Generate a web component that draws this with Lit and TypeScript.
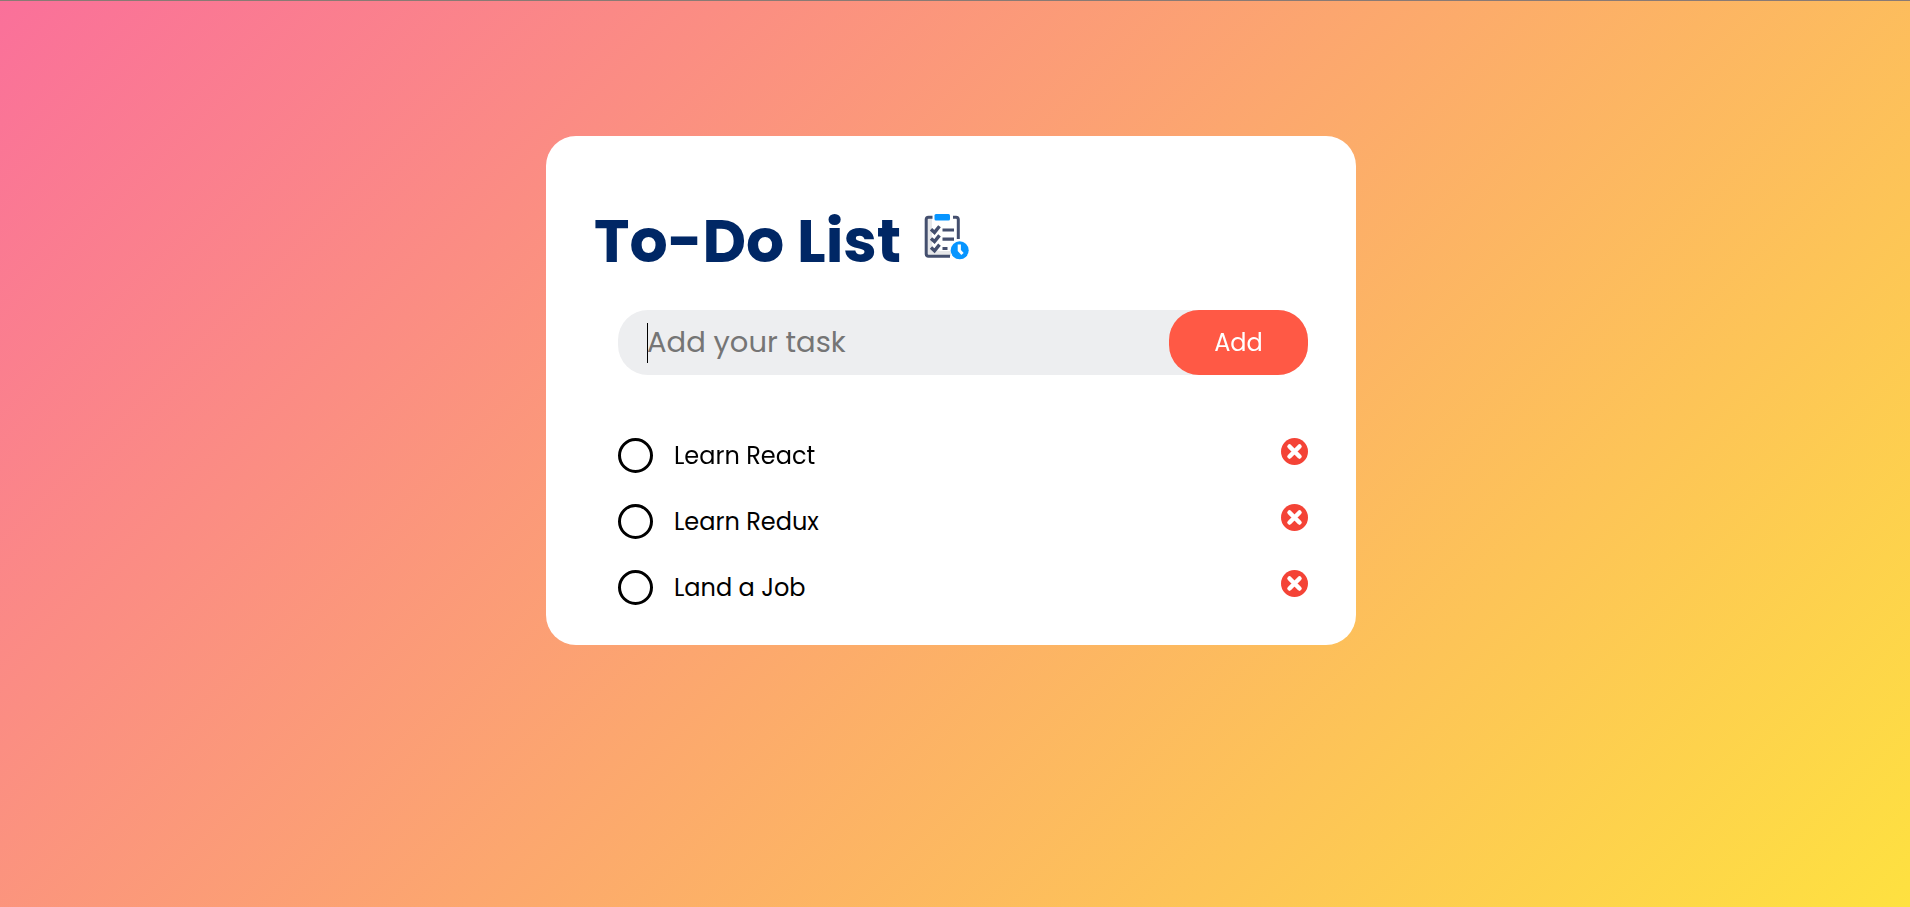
import { LitElement, html, css, svg } from "lit";
import { customElement, state } from "lit/decorators.js";

interface Task {
  id: number;
  text: string;
  done: boolean;
}

@customElement("app-root")
export class AppRoot extends LitElement {
  static styles = css`
    :host {
      display: block;
      font-family: Poppins, Inter, "Open Sans", sans-serif;
      color: #000;
    }
    * {
      box-sizing: border-box;
    }
    .page {
      min-height: 100vh;
      padding: 135px 8px 40px 0;
      border-top: 1px solid #8a7a74;
      background: linear-gradient(135deg, #fa709a, #fee140) border-box;
      background-clip: padding-box;
    }
    .card {
      width: 100%;
      max-width: 810px;
      margin: 0 auto;
      padding: 60px 48px 39px;
      border-radius: 30px;
      background: #fff;
    }
    .title {
      display: flex;
      align-items: center;
      gap: 23px;
      margin: 0 0 24px;
      font-size: 60px;
      line-height: 90px;
      font-weight: 700;
      color: #002765;
    }
    .title-icon {
      width: 46px;
      height: 46px;
      margin-bottom: 8px;
    }
    .content {
      padding-left: 24px;
    }
    .entry {
      display: flex;
      border-radius: 30px;
      background: #edeef0;
    }
    .entry-input {
      flex: 1;
      min-width: 0;
      height: 65px;
      padding: 0 29px;
      border: 0;
      outline: 0;
      font: inherit;
      font-size: 29px;
      caret-color: transparent;
      background: transparent;
    }
    .entry-input::placeholder {
      color: #757575;
      opacity: 1;
    }
    .entry-input:focus:placeholder-shown {
      background: linear-gradient(#000, #000) 29px 13px / 1px 40px no-repeat;
    }
    .entry-input:focus:not(:placeholder-shown) {
      caret-color: #000;
    }
    .add {
      width: 139px;
      border: 0;
      border-radius: 30px;
      font: inherit;
      font-size: 24px;
      color: #fff;
      background: #ff5945;
      cursor: pointer;
    }
    .list {
      display: grid;
      gap: 30px;
      margin: 63px 0 0;
      padding: 0;
      list-style: none;
    }
    .task {
      display: flex;
      align-items: flex-start;
    }
    .task-label {
      display: flex;
      flex: 1;
      align-items: flex-start;
      gap: 21px;
      font-size: 24px;
      line-height: 36px;
      cursor: pointer;
    }
    .check {
      appearance: none;
      flex: none;
      width: 35px;
      height: 35px;
      margin: 0;
      border: 3px solid #000;
      border-radius: 50%;
      cursor: pointer;
    }
    .check:checked {
      border-color: #ff5945;
      background: #ff5945;
    }
    .done {
      color: #757575;
      text-decoration: line-through;
    }
    .remove {
      display: flex;
      padding: 0;
      border: 0;
      background: none;
      cursor: pointer;
    }
    .remove-icon {
      width: 27px;
      height: 27px;
    }
  `;

  @state() private tasks: Task[] = [
    { id: 1, text: "Learn React", done: false },
    { id: 2, text: "Learn Redux", done: false },
    { id: 3, text: "Land a Job", done: false },
  ];

  private nextId = 4;

  firstUpdated() {
    this.renderRoot.querySelector<HTMLInputElement>(".entry-input")?.focus();
  }

  private add(event: Event) {
    event.preventDefault();
    const input = this.renderRoot.querySelector<HTMLInputElement>(".entry-input")!;
    const text = input.value.trim();
    if (!text) return;
    this.tasks = [...this.tasks, { id: this.nextId++, text, done: false }];
    input.value = "";
  }

  private toggle(id: number) {
    this.tasks = this.tasks.map((t) => (t.id === id ? { ...t, done: !t.done } : t));
  }

  private remove(id: number) {
    this.tasks = this.tasks.filter((t) => t.id !== id);
  }

  private clipboardIcon() {
    return html`<svg class="title-icon" viewBox="0 0 46 46" fill="none" aria-hidden="true">
      <path d="M2 4H8V30Q9 37 17 37H27V42H2Z" fill="#e6e7e9" />
      <path
        d="M8.500 3.200H4.500Q2.200 3.200 2.200 5.500V39.500Q2.200 42.300 4.500 42.300H26M29 3.200H32Q34.300 3.200 34.300 5.500V25"
        stroke="#444f6e"
        stroke-width="3"
      />
      <rect x="10.500" y="0" width="15.500" height="6.500" rx="1.500" fill="#0795ff" />
      ${[0, 9.2, 18.4].map(
        (y) => svg`<path d="M7 ${15.2 + y}l3.500 3.200 5-6.200" stroke="#444f6e" stroke-width="3.400" />`
      )}
      <path d="M18.500 16H30M18.500 25.200H30M18.500 34.500H23.500" stroke="#444f6e" stroke-width="3.200" />
      <circle cx="35.700" cy="36.300" r="9" fill="#0795ff" />
      <path d="M35.300 30.500V36.500L38.500 40" stroke="#fff" stroke-width="3.200" />
    </svg>`;
  }

  private removeIcon() {
    return html`<svg class="remove-icon" viewBox="0 0 27 27" aria-hidden="true">
      <circle cx="13.500" cy="13.500" r="13.500" fill="#f44336" />
      <path d="M8.500 8.500L18.500 18.500M18.500 8.500L8.500 18.500" stroke="#fff" stroke-width="4.500" stroke-linecap="round" />
    </svg>`;
  }

  render() {
    return html`
      <main class="page">
        <section class="card">
          <h1 class="title">To-Do List ${this.clipboardIcon()}</h1>
          <div class="content">
            <form class="entry" @submit=${this.add}>
              <input class="entry-input" type="text" placeholder="Add your task" aria-label="Add your task" />
              <button class="add" type="submit">Add</button>
            </form>
            <ul class="list">
              ${this.tasks.map(
                (t) => html`<li class="task">
                  <label class="task-label">
                    <input class="check" type="checkbox" .checked=${t.done} @change=${() => this.toggle(t.id)} />
                    <span class=${t.done ? "done" : ""}>${t.text}</span>
                  </label>
                  <button class="remove" type="button" aria-label="Remove ${t.text}" @click=${() => this.remove(t.id)}>
                    ${this.removeIcon()}
                  </button>
                </li>`
              )}
            </ul>
          </div>
        </section>
      </main>
    `;
  }
}
